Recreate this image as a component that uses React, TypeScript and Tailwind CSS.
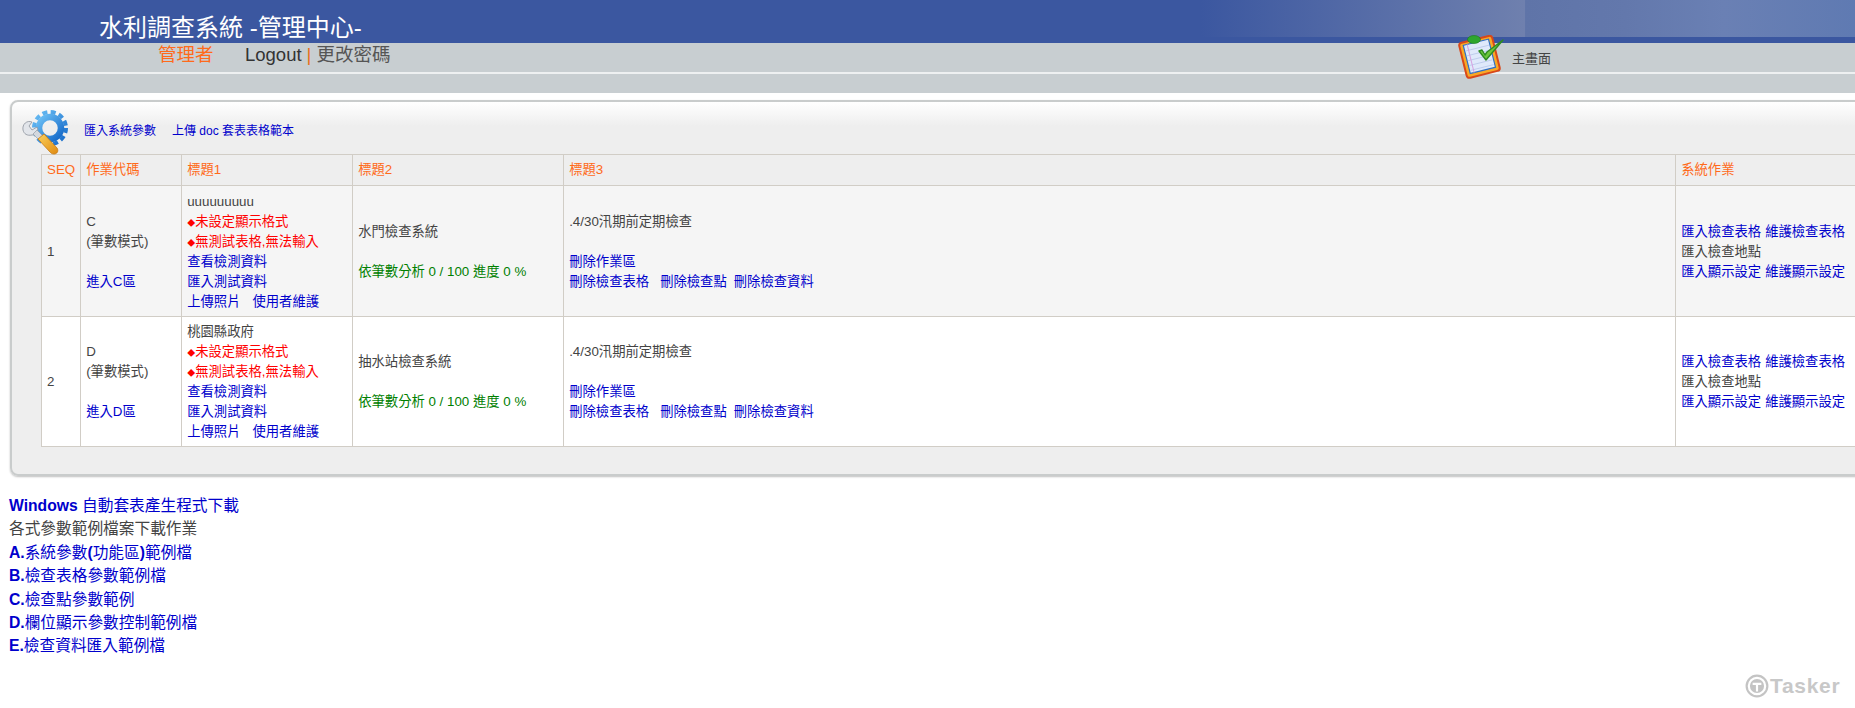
import React from 'react';

const font = '[font-family:"Liberation_Sans","Noto_Sans_CJK_TC",sans-serif]';

const A: React.FC<{ children: React.ReactNode; className?: string }> = ({ children, className }) => (
  <a href="#" className={`text-[#0000cc] ${className ?? ''}`}>{children}</a>
);

const GearIcon = () => (
  <svg width="48" height="48" viewBox="0 0 48 48" className="shrink-0">
    <defs>
      <linearGradient id="gearBlue" x1="0" y1="0" x2="1" y2="1">
        <stop offset="0" stopColor="#6cc0f5" />
        <stop offset="1" stopColor="#1468c8" />
      </linearGradient>
      <linearGradient id="handle" x1="0" y1="0" x2="1" y2="1">
        <stop offset="0" stopColor="#fbd15c" />
        <stop offset="1" stopColor="#e08a10" />
      </linearGradient>
    </defs>
    <circle cx="29" cy="18" r="16" fill="none" stroke="url(#gearBlue)" strokeWidth="4" strokeDasharray="5 3.400" />
    <circle cx="29" cy="18" r="11" fill="none" stroke="url(#gearBlue)" strokeWidth="6.500" />
    <path d="M2 20 C1 14 6 10 11 12 L8 16 L11 20 L16 17 C18 21 16 25 11 25 C6 26 3 24 2 20Z" fill="#e2e5ea" stroke="#8b929c" strokeWidth="0.8" />
    <path d="M12 24 L16 20 L22 26 L18 30Z" fill="#d4d8de" stroke="#8b929c" strokeWidth="0.6" />
    <path d="M17 29 L23 24 L36 38 C38 41 36 44 33 44 C31 44 30 43 29 42Z" fill="url(#handle)" stroke="#c87a10" strokeWidth="0.8" />
  </svg>
);

const ClipboardIcon = () => (
  <svg width="50" height="46" viewBox="0 0 50 46">
    <g transform="rotate(-14 22 24)">
      <rect x="6" y="4" width="34" height="36" rx="3" fill="#f9a825" stroke="#d8481a" strokeWidth="2" />
      <rect x="10" y="7" width="26" height="29" fill="#dfe9fb" stroke="#2e6fc4" strokeWidth="1.2" />
      <path d="M11 13H35M11 18H35M11 23H35M11 28H35M11 33H35" stroke="#b9c8ea" strokeWidth="0.8" />
      <path d="M14 7V36" stroke="#d6a0e0" strokeWidth="1" />
    </g>
    <ellipse cx="17" cy="4.500" rx="6.500" ry="4" fill="#2ea62e" stroke="#1c7a1c" strokeWidth="0.6" />
    <path d="M22 16 L29 25 L46 5 L30 17 L28 20 L25 15Z" fill="#6cc63c" stroke="#2f8a22" strokeWidth="1.4" strokeLinejoin="round" />
  </svg>
);

const TaskerMark = () => (
  <svg width="24" height="24" viewBox="0 0 22 22">
    <circle cx="11" cy="11" r="9.500" fill="none" stroke="#c4c4c4" strokeWidth="2" />
    <circle cx="11" cy="11" r="6.500" fill="#c4c4c4" />
    <path d="M7 8H15V10H12V16H10V10H7Z" fill="#ffffff" />
  </svg>
);

const rows = [
  {
    seq: 1,
    code: 'C',
    enter: '進入C區',
    owner: 'uuuuuuuuu',
    system: '水門檢查系統',
    bg: 'bg-[#f5f5f5]',
  },
  {
    seq: 2,
    code: 'D',
    enter: '進入D區',
    owner: '桃園縣政府',
    system: '抽水站檢查系統',
    bg: 'bg-white',
  },
];

const thClass = 'border border-[#d1cdc6] px-[5px] text-left align-middle font-normal text-[13.33px] text-[#ff6a1a]';
const tdClass = 'border border-[#d1cdc6] px-[5px] pt-[2px] align-middle text-[13.33px] leading-[20px]';

const App: React.FC = () => {
  return (
    <div className={`relative h-[708px] w-[1855px] overflow-hidden bg-white text-[#444444] ${font}`}>
      <header className="relative h-[43px] bg-[#3b57a0]">
        <div className="absolute right-0 top-0 h-[37px] w-[655px] bg-[linear-gradient(90deg,#3b57a0_0%,#6f80ae_49.600%,#5f74a8_49.700%,#6378ac_65%,#6a80b4_80%,#5f7ab2_100%)]" />
        <h1 className="relative pl-[99px] pt-[12px] text-[24px] leading-[32px] font-normal text-white">
          水利調查系統 -管理中心-
        </h1>
      </header>

      <nav className="relative flex h-[29px] items-center bg-[#c8ced1] pb-[5px] pl-[158px] text-[18.500px] leading-[24px]">
        <span className="w-[87px] text-[#ff6a1a]">管理者</span>
        <span className="text-[#333333]">Logout</span>
        <span className="mx-[5px] text-[#e8701a]">|</span>
        <span className="text-[#555555]">更改密碼</span>
      </nav>
      <div className="h-[2px] bg-[#eef0f1]" />
      <div className="h-[19px] bg-[#c8ced1]" />

      <div className="absolute left-[1457px] top-[35px] flex items-start">
        <ClipboardIcon />
        <span className="ml-[5px] mt-[15px] text-[13px] leading-[18px] text-[#444444]">主畫面</span>
      </div>

      <section className="ml-[10px] mt-[7px] h-[376px] w-[2000px] rounded-[8px] border-2 border-[#c9cccc] bg-[linear-gradient(180deg,#ffffff_0px,#eeeeee_24px)] shadow-[0_1px_2px_rgba(0,0,0,0.25)]">
        <div className="flex h-[52px] items-start pl-[9px] pt-[8px]">
          <GearIcon />
          <div className="ml-[15px] mt-[12px] flex gap-[16px] text-[12px] leading-[18px]">
            <A>匯入系統參數</A>
            <A>上傳 doc 套表表格範本</A>
          </div>
        </div>

        <table className="ml-[29px] table-fixed border-collapse">
          <colgroup>
            <col className="w-[39px]" />
            <col className="w-[101px]" />
            <col className="w-[171px]" />
            <col className="w-[211px]" />
            <col className="w-[1112px]" />
            <col className="w-[260px]" />
          </colgroup>
          <thead>
            <tr className="h-[31px] bg-[#eeeeee]">
              <th className={thClass}>SEQ</th>
              <th className={thClass}>作業代碼</th>
              <th className={thClass}>標題1</th>
              <th className={thClass}>標題2</th>
              <th className={thClass}>標題3</th>
              <th className={thClass}>系統作業</th>
            </tr>
          </thead>
          <tbody>
            {rows.map((row) => (
              <tr key={row.seq} className={`h-[130.500px] ${row.bg}`}>
                <td className={tdClass}>{row.seq}</td>
                <td className={tdClass}>
                  <div>{row.code}</div>
                  <div>(筆數模式)</div>
                  <div>&nbsp;</div>
                  <A>{row.enter}</A>
                </td>
                <td className={tdClass}>
                  <div>{row.owner}</div>
                  <div className="text-[#ff0000]"><span className="text-[8px] leading-none">◆</span>未設定顯示格式</div>
                  <div className="text-[#ff0000]"><span className="text-[8px] leading-none">◆</span>無測試表格,無法輸入</div>
                  <div><A>查看檢測資料</A></div>
                  <div><A>匯入測試資料</A></div>
                  <div className="flex gap-[12px]">
                    <A>上傳照片</A>
                    <A>使用者維護</A>
                  </div>
                </td>
                <td className={tdClass}>
                  <div>{row.system}</div>
                  <div>&nbsp;</div>
                  <div className="text-[#008000]">依筆數分析 0 / 100 進度 0 %</div>
                </td>
                <td className={tdClass}>
                  <div>.4/30汛期前定期檢查</div>
                  <div>&nbsp;</div>
                  <div><A>刪除作業區</A></div>
                  <div className="flex">
                    <A className="mr-[11px]">刪除檢查表格</A>
                    <A className="mr-[7px]">刪除檢查點</A>
                    <A>刪除檢查資料</A>
                  </div>
                </td>
                <td className={tdClass}>
                  <div className="flex gap-[4px]">
                    <A>匯入檢查表格</A>
                    <A>維護檢查表格</A>
                  </div>
                  <div>匯入檢查地點</div>
                  <div className="flex gap-[4px]">
                    <A>匯入顯示設定</A>
                    <A>維護顯示設定</A>
                  </div>
                </td>
              </tr>
            ))}
          </tbody>
        </table>
      </section>

      <div className="ml-[9px] mt-[18px] text-[15.700px] leading-[23.400px]">
        <div><A><b>Windows</b> 自動套表產生程式下載</A></div>
        <div>各式參數範例檔案下載作業</div>
        <div><A><b>A.</b>系統參數<b>(</b>功能區<b>)</b>範例檔</A></div>
        <div><A><b>B.</b>檢查表格參數範例檔</A></div>
        <div><A><b>C.</b>檢查點參數範例</A></div>
        <div><A><b>D.</b>欄位顯示參數控制範例檔</A></div>
        <div><A><b>E.</b>檢查資料匯入範例檔</A></div>
      </div>

      <div className="absolute left-[1745px] top-[674px] flex items-center gap-[1px]">
        <TaskerMark />
        <span className="text-[21px] leading-[24px] font-bold tracking-[0.7px] text-[#c8c8c8]">Tasker</span>
      </div>
    </div>
  );
};

export default App;
